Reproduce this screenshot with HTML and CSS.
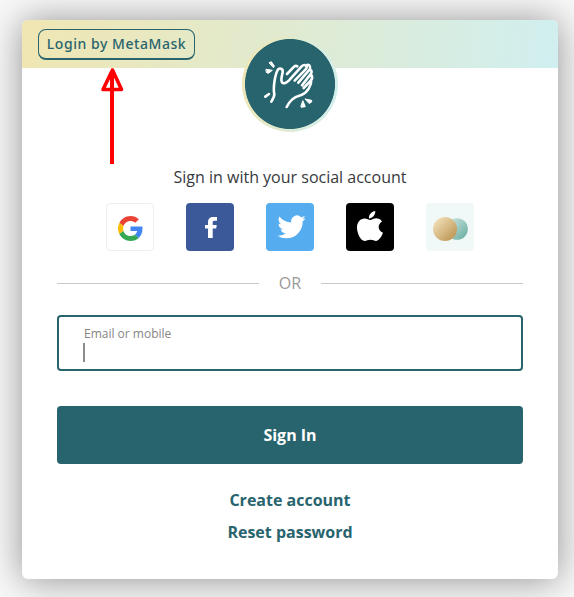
FILE: index.html
```html
<!DOCTYPE html>
<html lang="en">
<head>
<meta charset="utf-8">
<title>Sign in</title>
<link rel="stylesheet" href="styles.css">
</head>
<body>
<main class="card">
  <header class="banner">
    <button class="metamask" type="button">Login by MetaMask</button>
    <svg class="arrow" width="26" height="98" viewBox="0 0 26 98" fill="none" stroke="#f00" stroke-width="4"><path d="M13 97V5"/><path stroke-width="3.600" stroke-linejoin="round" d="M13.500 3L4 22.500H22.500Z"/></svg>
    <div class="logo">
      <svg viewBox="21 18 288 288" fill="none" stroke="#fff" stroke-width="7.800" stroke-linecap="round" stroke-linejoin="round">
        <path d="M109 215C114 207 118 201 118 193C114 176 119 137 128 120C133 112 145 116 143 127C141 138 136 149 141 157C146 163 155 158 162 151L200 109Q207 102 214 107Q218 111 211 119L179 152"/>
        <path d="M156 132L175 112Q181 105 187 109M213 107Q222 101 225 110Q227 115 221 122L190 158M224 119Q233 121 228 131L201 166M229 135Q235 143 227 152L206 174M229 148C230 167 217 188 199 195C175 202 165 211 155 231M91 200L102 192"/>
        <g fill="#fff" stroke-width="3"><path d="M103 98L109 95L118 108L116 112ZM94 118L112 121L100 130L95 128ZM204 213L211 230L199 232L198 229ZM211 207L230 211V216L223 220Z"/></g>
      </svg>
    </div>
  </header>
  <section class="content">
    <p class="intro">Sign in with your social account</p>
    <div class="socials">
      <button class="social google" type="button" aria-label="Google"><svg width="25" height="25" viewBox="0 0 48 48"><path fill="#EA4335" d="M24 9.500c3.540 0 6.710 1.220 9.210 3.600l6.850-6.850C35.900 2.380 30.470 0 24 0 14.620 0 6.510 5.380 2.560 13.220l7.980 6.190C12.430 13.720 17.740 9.500 24 9.500z"/><path fill="#4285F4" d="M46.980 24.550c0-1.570-.15-3.090-.38-4.550H24v9.020h12.940c-.58 2.960-2.260 5.480-4.780 7.180l7.730 6c4.510-4.180 7.090-10.360 7.090-17.650z"/><path fill="#FBBC05" d="M10.530 28.590A14.500 14.500 0 0 1 9.770 24c0-1.600.27-3.140.76-4.590l-7.970-6.190A23.900 23.900 0 0 0 0 24c0 3.880.92 7.540 2.560 10.780z"/><path fill="#34A853" d="M24 48c6.480 0 11.930-2.130 15.890-5.810l-7.730-6C30.010 37.640 27.240 38.490 24 38.490c-6.260 0-11.570-4.220-13.470-9.910l-7.970 6.190C6.510 42.620 14.620 48 24 48z"/></svg></button>
      <button class="social facebook" type="button" aria-label="Facebook"><svg width="12" height="21" viewBox="0 0 12 21"><path fill="#fff" d="M3 21V11.600H0V8H3V5.300C3 1.900 5 0 8.200 0H12V3.700H9.500C7.900 3.700 7.700 4.500 7.700 5.700V8H11.700L11.200 11.600H7.700V21Z"/></svg></button>
      <button class="social twitter" type="button" aria-label="Twitter"><svg width="30" height="30" viewBox="0 0 24 24"><path fill="#fff" d="M23.640 4.940c-.83.370-1.720.620-2.650.730.950-.570 1.680-1.480 2.030-2.550-.890.530-1.880.910-2.930 1.120A4.620 4.620 0 0 0 12.220 8.450C8.390 8.260 4.980 6.420 2.700 3.630A4.600 4.600 0 0 0 4.130 9.790c-.760-.020-1.470-.230-2.090-.580v.060a4.620 4.620 0 0 0 3.700 4.530c-.680.180-1.390.210-2.080.080a4.620 4.620 0 0 0 4.310 3.210A9.260 9.260 0 0 1 1.130 19 13.070 13.070 0 0 0 8.210 21.070c8.490 0 13.130-7.030 13.130-13.130l-.010-.6a9.380 9.380 0 0 0 2.310-2.400z"/></svg></button>
      <button class="social apple" type="button" aria-label="Apple"><svg width="26" height="31" viewBox="0 0 26 31"><path fill="#fff" d="M18.300 0C18.500 4.100 15.500 7.300 12 7.400C11.500 3.800 14.900.5 18.300 0ZM25 10.500C20.200 13.400 20.800 19.700 26 21.800C24.800 25.200 22 29.700 19.300 29.900C17.100 30 16.300 28.700 13.500 28.700C10.700 28.700 9.800 29.900 7.700 30C3.800 30.100 0 22.500 0 16.600C0 10.600 3.700 7.500 7.500 7.400C10 7.400 11.900 9 13.400 9C14.900 9 17.200 7.100 20.300 7.400C22.200 7.500 23.900 8.500 25 10.500Z"/></svg></button>
      <button class="social circles" type="button" aria-label="Other account"><svg width="35" height="24" viewBox="0 0 35 24"><defs><linearGradient id="gold" x1="0" y1="0" x2="1" y2="1"><stop stop-color="#fae9c4"/><stop offset="1" stop-color="#b58c48"/></linearGradient><linearGradient id="mint" x1="0" y1="0" x2="1" y2="1"><stop stop-color="#d2eae3"/><stop offset="1" stop-color="#65aa9e"/></linearGradient></defs><circle cx="24" cy="12" r="10.800" fill="url(#mint)"/><circle cx="12" cy="12" r="12" fill="url(#gold)"/></svg></button>
    </div>
    <div class="divider"><span>OR</span></div>
    <label class="field"><span class="field-label">Email or mobile</span><span class="caret"></span></label>
    <button class="submit" type="button">Sign In</button>
    <nav class="links"><a>Create account</a><a>Reset password</a></nav>
  </section>
</main>
</body>
</html>
```
FILE: styles.css
```css
* { box-sizing: border-box; }
body {
  margin: 0;
  height: 597px;
  padding: 20px 16px 18px 22px;
  overflow: hidden;
  background: #f8f8f8;
  font-family: "Open Sans", "Noto Sans", sans-serif;
  font-size: 16px;
}
button { font: inherit; margin: 0; border: 0; padding: 0; }
svg { display: block; }
.card {
  height: 559px;
  background: #fff;
  border-radius: 6px;
  box-shadow: 0 1px 36px rgba(0, 0, 0, .42);
}
.banner {
  position: relative;
  height: 48px;
  padding: 9px 16px;
  border-radius: 6px 6px 0 0;
  background: linear-gradient(100deg, #f0e6b2, #d0eff0);
}
.metamask {
  display: block;
  width: 157px;
  height: 31px;
  border: 1px solid #28646e;
  border-bottom-width: 2px;
  border-radius: 8px;
  background: none;
  color: #28646e;
  font: 500 14px/28px "Noto Sans", sans-serif;
  letter-spacing: .55px;
  white-space: nowrap;
}
.arrow { position: absolute; left: 77px; top: 47px; }
.logo {
  position: absolute;
  left: 220px;
  top: 16px;
  width: 96px;
  height: 96px;
  border-radius: 50%;
  background: radial-gradient(circle, #28646e 44.600px, transparent 45.400px), linear-gradient(100deg, #f0e6b2, #d0eff0);
}
.content { padding: 97px 35px 0; }
.intro { margin: 0; line-height: 24px; text-align: center; color: #37393d; }
.socials { display: flex; justify-content: center; gap: 32px; margin-top: 14px; }
.social {
  display: flex;
  align-items: center;
  justify-content: center;
  width: 48px;
  height: 48px;
  border-radius: 4px;
}
.google { background: #fff; border: 1px solid #eee; padding-top: 2px; }
.facebook { background: #3b5998; padding-left: 1px; }
.twitter { background: #55acee; padding: 0 0 0 1px; }
.apple { background: #000; padding-bottom: 1px; }
.circles { background: #f0f9f7; padding: 3px 0 0 1px; }
.divider {
  display: flex;
  align-items: center;
  gap: 20px;
  height: 24px;
  margin-top: 20px;
  color: #999;
}
.divider::before, .divider::after { content: ""; flex: 1; height: 1px; background: #c8c8c8; }
.field {
  display: block;
  height: 56px;
  margin-top: 20px;
  padding: 9px 24px;
  border: 2px solid #28646e;
  border-radius: 4px;
}
.field-label { display: block; padding-left: 1px; font-size: 12px; line-height: 16px; color: #858585; }
.caret { display: block; width: 2px; height: 19px; margin-top: 1px; background: #8c8c8c; }
.submit {
  display: block;
  width: 100%;
  height: 58px;
  margin-top: 35px;
  border-radius: 4px;
  background: #28646e;
  color: #fff;
  font-weight: 700;
}
.links {
  display: flex;
  flex-direction: column;
  align-items: center;
  gap: 8px;
  margin-top: 24px;
  color: #28646e;
  font-weight: 700;
  line-height: 24px;
}
```
